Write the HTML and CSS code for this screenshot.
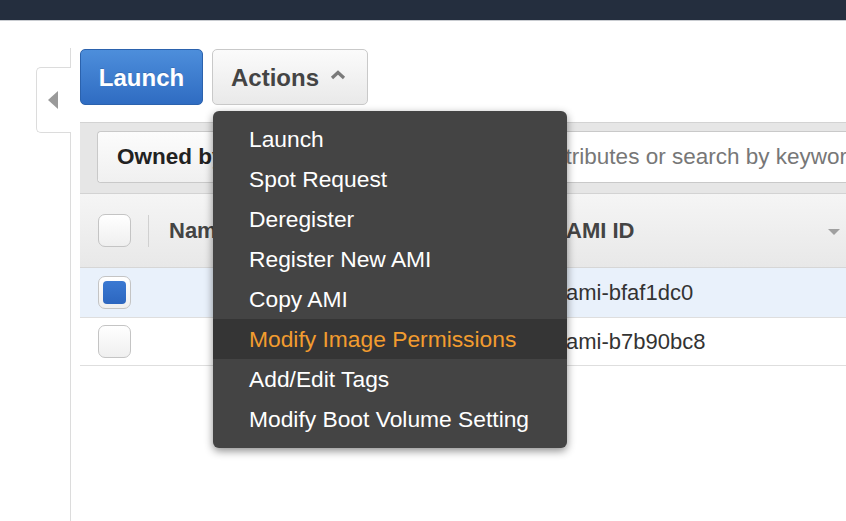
FILE: index.html
```html
<!DOCTYPE html>
<html>
<head>
<meta charset="utf-8">
<link rel="stylesheet" href="styles.css">
</head>
<body>
<div class="topbar"></div>
<div class="main">
  <aside class="side">
    <div class="tab"><span class="tri"></span></div>
  </aside>
  <section class="content">
    <div class="actions-row">
      <button class="btn btn-primary">Launch</button>
      <div class="dropdown">
        <button class="btn btn-default">Actions
          <svg class="caret-up" width="16" height="10" viewBox="0 0 16 10"><polyline points="2,8 8,2.5 14,8" fill="none" stroke="#7a7a7a" stroke-width="3.2" stroke-linejoin="miter"/></svg>
        </button>
        <ul class="menu">
          <li>Launch</li>
          <li>Spot Request</li>
          <li>Deregister</li>
          <li>Register New AMI</li>
          <li>Copy AMI</li>
          <li class="active">Modify Image Permissions</li>
          <li>Add/Edit Tags</li>
          <li>Modify Boot Volume Setting</li>
        </ul>
      </div>
    </div>
    <div class="panel">
      <div class="toolbar">
        <div class="filter">
          <span class="owned">Owned by me</span>
          <span class="search">Filter by tags and attributes or search by keyword</span>
        </div>
      </div>
      <div class="table">
        <div class="row head">
          <div class="cell check"><span class="box"></span></div>
          <div class="cell name">Name</div>
          <div class="cell ami">AMI ID <span class="sort"></span></div>
        </div>
        <div class="row selected">
          <div class="cell check"><span class="box on"><span class="fill"></span></span></div>
          <div class="cell name"></div>
          <div class="cell ami">ami-bfaf1dc0</div>
        </div>
        <div class="row">
          <div class="cell check"><span class="box"></span></div>
          <div class="cell name"></div>
          <div class="cell ami">ami-b7b90bc8</div>
        </div>
      </div>
    </div>
  </section>
</div>
</body>
</html>
```
FILE: styles.css
```css
html, body {
  margin: 0;
  padding: 0;
  background: #ffffff;
  overflow: hidden;
  height: 521px;
}
body {
  font-family: "Liberation Sans", Arial, Helvetica, sans-serif;
  color: #333;
}
.topbar {
  height: 20px;
  background: #242e3e;
  border-bottom: 1px solid #c9ccd1;
}
.main {
  display: flex;
  height: 500px;
}
.side {
  width: 70px;
  flex: 0 0 70px;
  padding-top: 46px;
  position: relative;
  z-index: 2;
}
.tab {
  margin-left: 36px;
  width: 35px;
  height: 66px;
  box-sizing: border-box;
  border: 1px solid #dcdcdc;
  border-right: none;
  border-radius: 5px 0 0 5px;
  background: #fff;
  display: flex;
  align-items: center;
  padding-left: 11px;
}
.tri {
  width: 0;
  height: 0;
  border-top: 9px solid transparent;
  border-bottom: 9px solid transparent;
  border-right: 10px solid #9a9a9a;
}
.content {
  margin-top: 27px;
  border-left: 1px solid #dcdcdc;
  padding-left: 9px;
  padding-top: 1px;
  width: 800px;
  flex: 0 0 800px;
}
.actions-row {
  display: flex;
  gap: 9px;
  height: 56px;
}
.btn {
  font-family: "Liberation Sans", Arial, Helvetica, sans-serif;
  font-weight: bold;
  font-size: 24px;
  height: 56px;
  border-radius: 5px;
  box-sizing: border-box;
  cursor: pointer;
  display: flex;
  align-items: center;
  padding-top: 2px;
}
.btn-primary {
  width: 123px;
  justify-content: center;
  color: #fff;
  background: linear-gradient(#4d8edb, #2f6cc2);
  border: 1px solid #2b62ad;
  text-shadow: 0 -1px 0 rgba(0,0,0,0.15);
}
.dropdown {
  position: relative;
}
.btn-default {
  width: 156px;
  padding-left: 18px;
  padding-right: 0;
  color: #444;
  background: linear-gradient(#fbfbfb, #e9e9e9);
  border: 1px solid #c9c9c9;
}
.caret-up {
  margin-left: 11px;
  margin-top: -6px;
}
.menu {
  position: absolute;
  top: 62px;
  left: 1px;
  width: 354px;
  margin: 0;
  padding: 8px 0 9px;
  list-style: none;
  background: #444444;
  border-radius: 6px;
  box-shadow: 0 3px 9px rgba(0,0,0,0.45);
  z-index: 10;
}
.menu li {
  height: 40px;
  line-height: 40px;
  padding-left: 36px;
  font-size: 22.8px;
  color: #ffffff;
  white-space: nowrap;
}
.menu li.active {
  background: #353535;
  color: #f29c2f;
}
.panel {
  margin-top: 17px;
}
.toolbar {
  background: #e6e6e6;
  border-top: 1px solid #d3d3d3;
  border-bottom: 1px solid #d3d3d3;
  padding: 8px 0 10px 17px;
}
.filter {
  display: flex;
  height: 52px;
  box-sizing: border-box;
  border: 1px solid #c9c9c9;
  border-right: none;
  border-radius: 4px 0 0 4px;
  background: #fff;
  font-size: 22.5px;
  align-items: stretch;
  white-space: nowrap;
  overflow: hidden;
}
.owned {
  display: flex;
  align-items: center;
  padding: 0 20px 0 19px;
  width: 211px;
  flex: 0 0 211px;
  font-weight: bold;
  color: #222;
  background: linear-gradient(#fcfcfc, #f0f0f0);
  border-right: 1px solid #c9c9c9;
  border-radius: 4px 0 0 4px;
}
.search {
  display: flex;
  align-items: center;
  padding-left: 19px;
  color: #777;
}
.table {
  font-size: 22px;
}
.row {
  display: grid;
  grid-template-columns: 69px 397px 1fr;
  height: 50px;
  border-bottom: 1px solid #dedede;
  box-sizing: border-box;
  align-items: center;
}
.row.head {
  height: 74px;
  background: linear-gradient(#f5f5f5, #e8e8e8);
  border-bottom: 1px solid #d6d6d6;
  font-weight: bold;
  color: #444;
}
.row.selected {
  background: #e9f1fb;
}
.row:last-child {
  height: 48px;
}
.cell {
  display: flex;
  align-items: center;
  height: 100%;
  box-sizing: border-box;
}
.check {
  padding-left: 18px;
}
.head .check {
  position: relative;
}
.head .check::after {
  content: "";
  position: absolute;
  right: 0;
  top: 21px;
  height: 32px;
  border-right: 1px solid #d0d0d0;
}
.name {
  padding-left: 20px;
}
.ami {
  padding-left: 20px;
  position: relative;
}
.box {
  width: 33px;
  height: 33px;
  box-sizing: border-box;
  border: 1px solid #c4c4c4;
  border-radius: 7px;
  background: linear-gradient(#ffffff, #efefef);
  display: flex;
  align-items: center;
  justify-content: center;
}
.fill {
  width: 23px;
  height: 23px;
  border-radius: 4px;
  background: linear-gradient(#3b79d2, #2c66bf);
}
.sort {
  position: absolute;
  left: 282px;
  top: 35px;
  width: 0;
  height: 0;
  border-left: 6px solid transparent;
  border-right: 6px solid transparent;
  border-top: 6px solid #a0a0a0;
}
```
